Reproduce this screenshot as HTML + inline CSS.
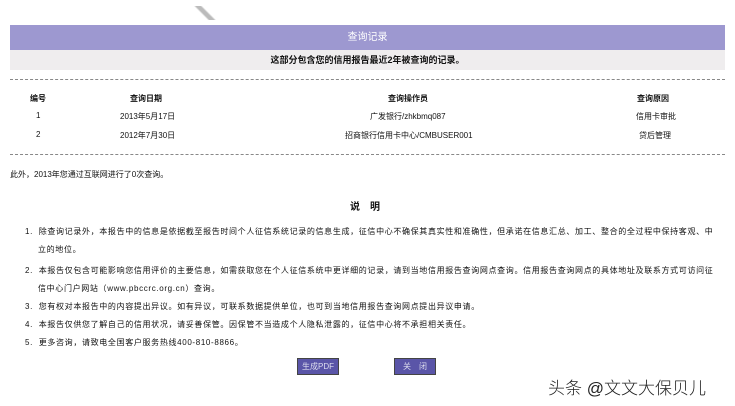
<!DOCTYPE html>
<html><head><meta charset="utf-8"><style>
body{margin:0;width:735px;height:406px;background:#fff;position:relative;overflow:hidden;font-family:"Liberation Sans","Noto Sans CJK SC",sans-serif;color:#111}
.a{position:absolute;white-space:nowrap}
.f{font-size:8px}
.l{letter-spacing:0.65px}
.dash{position:absolute;left:10px;width:715px;border-top:1px dashed #888}
.btn{position:absolute;top:358px;height:15px;background:#5a55a8;color:#dde;font-size:8px;text-align:center;line-height:15px;border:1px solid #444}
</style></head><body>
<div class="a" style="left:190px;top:6px;width:30px;height:14px;background:linear-gradient(45deg,transparent 40%,#bbb 45%,#bbb 55%,transparent 60%)"></div>
<div class="a" style="left:10px;top:25px;width:715px;height:25px;background:#9d98d0;color:#fff;font-size:10px;text-align:center;line-height:25px">查询记录</div>
<div class="a" style="left:10px;top:50px;width:715px;height:20px;background:#efedee;font-size:9px;font-weight:bold;text-align:center;line-height:20px">这部分包含您的信用报告最近2年被查询的记录。</div>
<div class="dash" style="top:79px"></div>
<div class="a f" style="left:30px;top:93px;font-weight:bold">编号</div>
<div class="a f" style="left:130px;top:93px;font-weight:bold">查询日期</div>
<div class="a f" style="left:388px;top:93px;font-weight:bold">查询操作员</div>
<div class="a f" style="left:637px;top:93px;font-weight:bold">查询原因</div>
<div class="a f" style="left:36px;top:111px">1</div>
<div class="a f" style="left:120px;top:111px">2013年5月17日</div>
<div class="a f" style="left:370px;top:111px">广发银行/zhkbmq087</div>
<div class="a f" style="left:636px;top:111px">信用卡审批</div>
<div class="a f" style="left:36px;top:130px">2</div>
<div class="a f" style="left:120px;top:130px">2012年7月30日</div>
<div class="a f" style="left:345px;top:130px">招商银行信用卡中心/CMBUSER001</div>
<div class="a f" style="left:639px;top:130px">贷后管理</div>
<div class="dash" style="top:154px"></div>
<div class="a f" style="left:10px;top:169px">此外，2013年您通过互联网进行了0次查询。</div>
<div class="a" style="left:350px;top:198px;font-size:10px;font-weight:bold">说　明</div>
<div class="a f l" style="left:25px;top:226px">1.&nbsp; 除查询记录外，本报告中的信息是依据截至报告时间个人征信系统记录的信息生成，征信中心不确保其真实性和准确性，但承诺在信息汇总、加工、整合的全过程中保持客观、中</div>
<div class="a f l" style="left:38px;top:244px">立的地位。</div>
<div class="a f l" style="left:25px;top:265px">2.&nbsp; 本报告仅包含可能影响您信用评价的主要信息，如需获取您在个人征信系统中更详细的记录，请到当地信用报告查询网点查询。信用报告查询网点的具体地址及联系方式可访问征</div>
<div class="a f l" style="left:38px;top:283px">信中心门户网站（www.pbccrc.org.cn）查询。</div>
<div class="a f l" style="left:25px;top:301px">3.&nbsp; 您有权对本报告中的内容提出异议。如有异议，可联系数据提供单位，也可到当地信用报告查询网点提出异议申请。</div>
<div class="a f l" style="left:25px;top:319px">4.&nbsp; 本报告仅供您了解自己的信用状况，请妥善保管。因保管不当造成个人隐私泄露的，征信中心将不承担相关责任。</div>
<div class="a f l" style="left:25px;top:337px">5.&nbsp; 更多咨询，请致电全国客户服务热线400-810-8866。</div>
<div class="btn" style="left:297px;width:40px">生成PDF</div>
<div class="btn" style="left:394px;width:40px">关　闭</div>
<div class="a" style="left:548px;top:374px;font-size:17px;color:#222;font-weight:300">头条 @文文大保贝儿</div>
</body></html>
